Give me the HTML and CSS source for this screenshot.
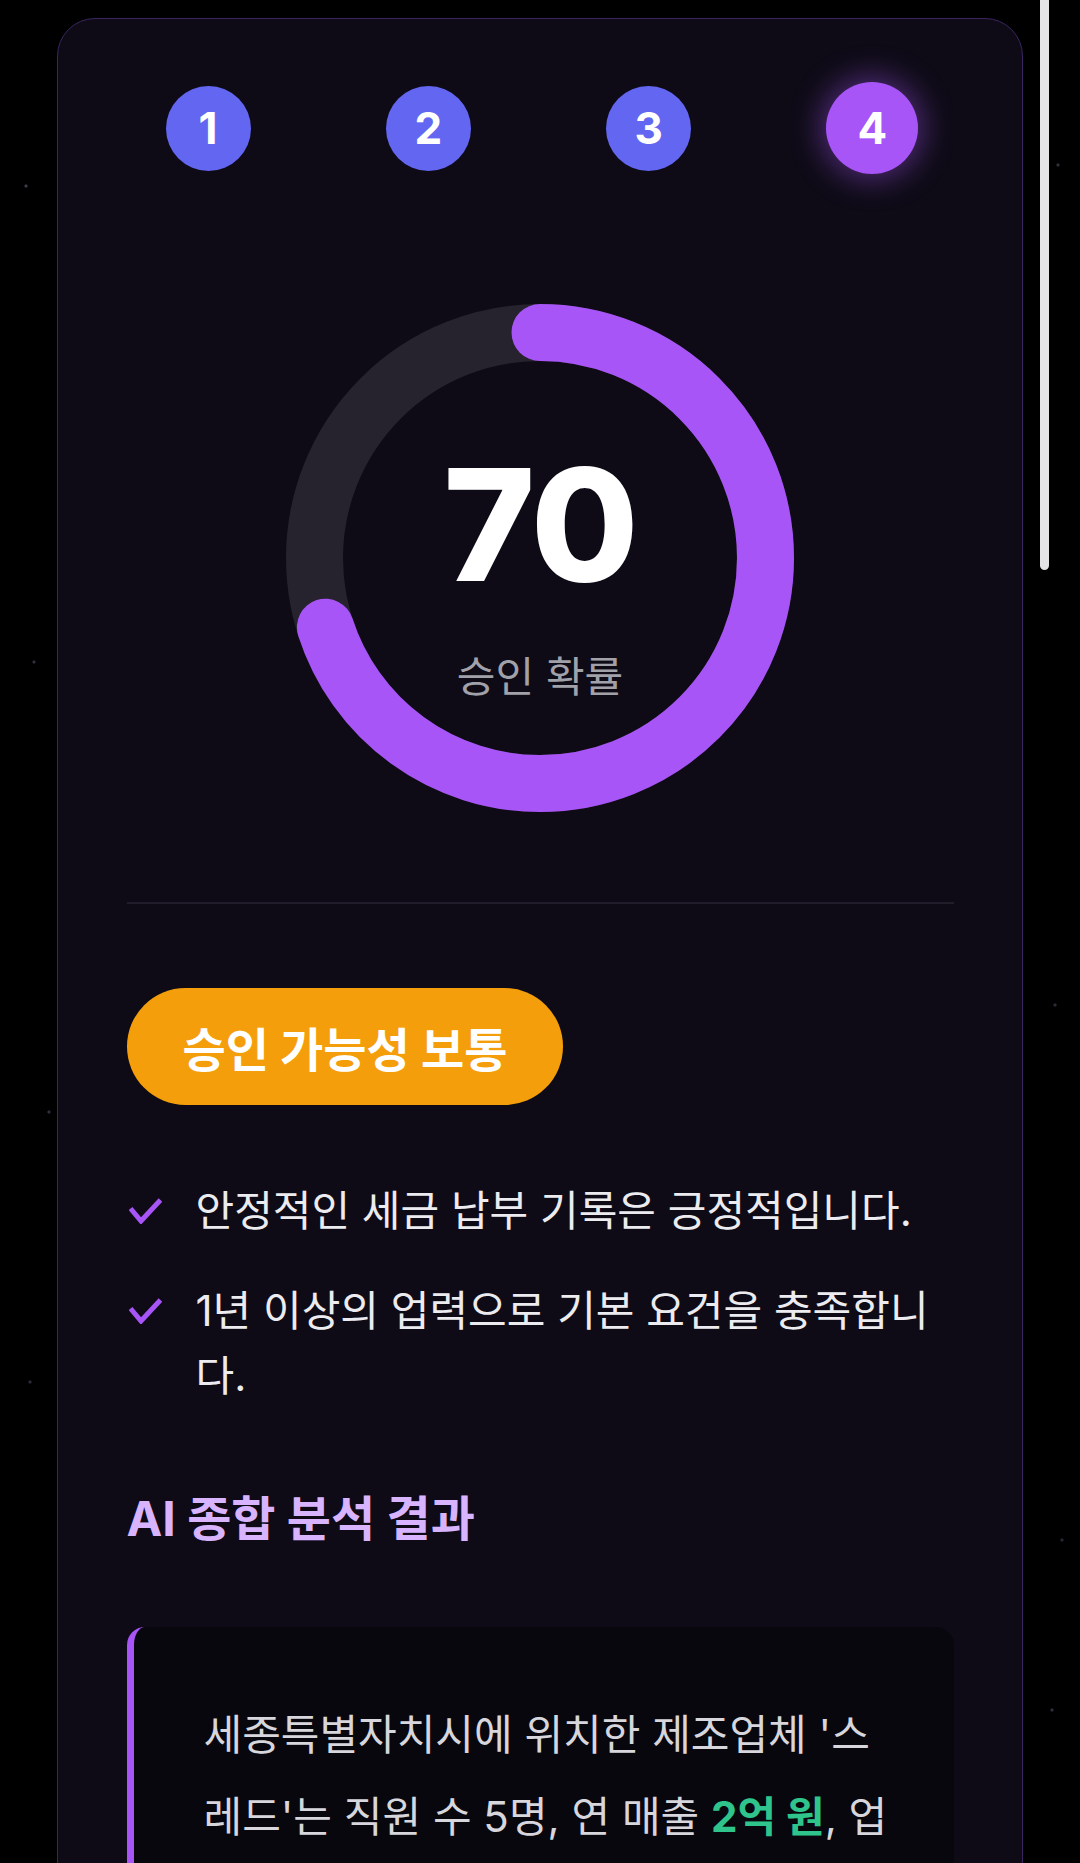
FILE: index.html
```html
<!DOCTYPE html>
<html lang="ko">
<head>
<meta charset="utf-8">
<title>승인 확률</title>
<link rel="stylesheet" href="styles.css">
</head>
<body>
<div class="scroll-thumb"></div>
<main class="card">
  <div class="steps">
    <div class="step">1</div>
    <div class="step">2</div>
    <div class="step">3</div>
    <div class="step step-active">4</div>
  </div>

  <div class="gauge">
    <svg class="gauge-svg" viewBox="0 0 508 508" width="508" height="508">
      <circle class="gauge-track" cx="254" cy="254" r="225.5"></circle>
      <circle class="gauge-arc" cx="254" cy="254" r="225.5" stroke-dasharray="991.8 1416.9" transform="rotate(-90 254 254)"></circle>
    </svg>
    <div class="gauge-text">
      <div class="score">70</div>
      <div class="score-label">승인 확률</div>
    </div>
  </div>

  <hr class="divider">

  <div class="badge">승인 가능성 보통</div>

  <ul class="checks">
    <li class="check-item">
      <span class="check-icon"><svg viewBox="0 0 33 26" width="33" height="26"><path d="M1.5 10.5 L12 23 L31.5 2" /></svg></span>
      <span class="check-text">안정적인 세금 납부 기록은 긍정적입니다.</span>
    </li>
    <li class="check-item">
      <span class="check-icon"><svg viewBox="0 0 33 26" width="33" height="26"><path d="M1.5 10.5 L12 23 L31.5 2" /></svg></span>
      <span class="check-text">1년 이상의 업력으로 기본 요건을 충족합니다.</span>
    </li>
  </ul>

  <h2 class="section-title">AI 종합 분석 결과</h2>

  <div class="analysis">
    <p class="analysis-text">세종특별자치시에 위치한 제조업체 '스레드'는 직원 수 5명, 연 매출 <strong class="money">2억 원</strong>, 업력 1년의 기업으로 안정적인 세금 납부 기록을 보유하고 있습니다.</p>
  </div>
</main>
</body>
</html>
```

FILE: styles.css
```css
html, body {
  margin: 0;
  padding: 0;
  overflow: hidden;
}

body {
  background-color: #000;
  background-image:
    radial-gradient(circle at 26px 186px, #3a3a48 1.2px, transparent 2px),
    radial-gradient(circle at 34px 662px, #2e2e3a 1.2px, transparent 2px),
    radial-gradient(circle at 49px 1112px, #2e2e3a 1.2px, transparent 2px),
    radial-gradient(circle at 30px 1382px, #2a2a36 1.2px, transparent 2px),
    radial-gradient(circle at 1058px 165px, #2e2e3a 1.2px, transparent 2px),
    radial-gradient(circle at 1055px 1005px, #2a2a36 1.2px, transparent 2px),
    radial-gradient(circle at 1052px 1710px, #2e2e3a 1.2px, transparent 2px),
    radial-gradient(circle at 1062px 1540px, #262632 1.2px, transparent 2px);
  background-repeat: no-repeat;
  font-family: Inter, "Noto Sans CJK KR", sans-serif;
  color: #ececf0;
  min-height: 1863px;
}

.scroll-thumb {
  position: fixed;
  top: 0;
  left: 1040px;
  width: 9px;
  height: 570px;
  background: #e4e4e6;
  border-radius: 0 0 5px 5px;
  z-index: 5;
}

.card {
  margin: 18px 57px 0;
  border: 1.5px solid #3a2560;
  border-radius: 38px;
  background: #0e0b16;
  padding: 63px 68.5px 120px;
  min-height: 2000px;
  box-sizing: border-box;
}

/* steps */
.steps {
  display: flex;
  justify-content: space-between;
  align-items: center;
  padding: 0 35px 0 39px;
}

.step {
  width: 85px;
  height: 85px;
  border-radius: 50%;
  background: #6366f1;
  color: #fff;
  font-family: Inter, sans-serif;
  font-weight: 700;
  font-size: 44px;
  display: flex;
  align-items: center;
  justify-content: center;
}

.step-active {
  width: 92px;
  height: 92px;
  background: #a855f7;
  box-shadow: 0 0 30px 6px rgba(168, 85, 247, 0.42);
}

/* gauge */
.gauge {
  width: 508px;
  height: 508px;
  margin: 130px auto 0;
  display: grid;
}

.gauge-svg,
.gauge-text {
  grid-area: 1 / 1;
}

.gauge-track {
  fill: none;
  stroke: #26222e;
  stroke-width: 57;
}

.gauge-arc {
  fill: none;
  stroke: #a855f7;
  stroke-width: 57;
  stroke-linecap: round;
}

.gauge-text {
  align-self: start;
  justify-self: center;
  padding-top: 143px;
  display: flex;
  flex-direction: column;
  align-items: center;
}

.score {
  font-family: Inter, sans-serif;
  font-weight: 800;
  font-size: 156px;
  line-height: 156px;
  color: #fff;
  letter-spacing: -2px;
}

.score-label {
  margin-top: 49px;
  font-size: 42px;
  line-height: 50px;
  color: #a1a1aa;
}

/* divider */
.divider {
  border: none;
  height: 2px;
  background: #211d2a;
  margin: 90px 0 0;
}

/* badge */
.badge {
  margin-top: 84px;
  width: fit-content;
  height: 117px;
  padding: 0 56px;
  box-sizing: border-box;
  border-radius: 59px;
  background: #f59e0b;
  color: #fff;
  font-weight: 700;
  font-size: 47px;
  display: flex;
  align-items: center;
}

/* checks */
.checks {
  list-style: none;
  margin: 73px 0 0;
  padding: 0;
}

.check-item {
  display: flex;
  gap: 34px;
  font-size: 42px;
  line-height: 65px;
  color: #ececf0;
  padding-left: 2px;
}

.check-item + .check-item {
  margin-top: 35px;
}

.check-icon {
  flex: none;
  height: 65px;
  display: flex;
  align-items: center;
}

.check-icon path {
  fill: none;
  stroke: #a855f7;
  stroke-width: 5;
}

/* section title */
.section-title {
  margin: 81px 0 0;
  font-size: 48px;
  line-height: 60px;
  font-weight: 700;
  color: #d8b4fe;
}

/* analysis */
.analysis {
  margin-top: 78px;
  border-left: 7px solid #a855f7;
  border-radius: 18px;
  background: #09070e;
  padding: 67px 59px 40px 70px;
}

.analysis-text {
  margin: 0;
  font-size: 42px;
  line-height: 82px;
  color: #d6d6dc;
}

.money {
  color: #2ec48c;
  font-weight: 700;
}
```
